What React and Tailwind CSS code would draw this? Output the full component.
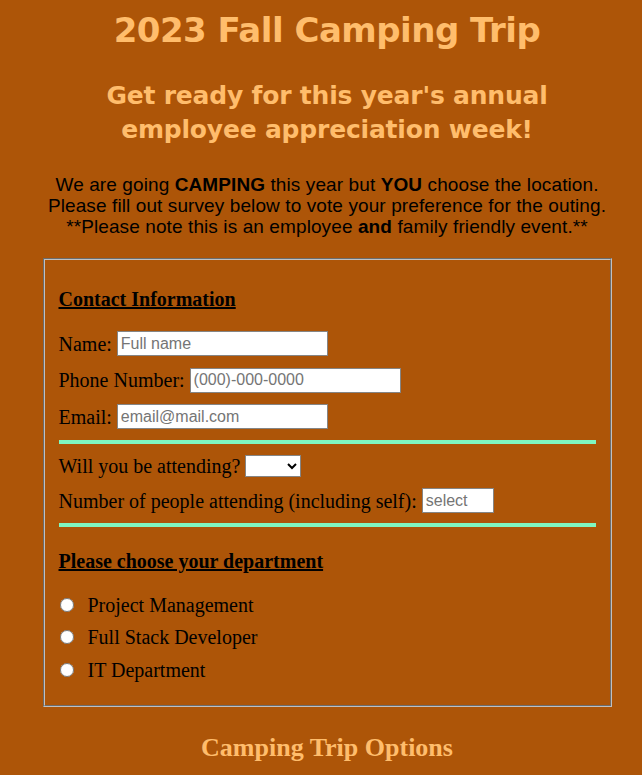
import React from 'react'

const serif = "font-['Liberation_Serif','Times_New_Roman',serif]"

function Row({ label, children, className = '' }) {
  return (
    <div className={`flex items-center ${className}`}>
      <span className="mr-[5px]">{label}</span>
      {children}
    </div>
  )
}

function TextBox({ placeholder, width }) {
  return (
    <input
      type="text"
      placeholder={placeholder}
      className={`${width} h-[25px] bg-white border border-[#858585] pl-[3px] text-[16px] font-['Liberation_Sans',Arial,sans-serif] placeholder:text-[#757575] text-black outline-none`}
    />
  )
}

export default function App() {
  const departments = ['Project Management', 'Full Stack Developer', 'IT Department']

  return (
    <div className="min-h-[775px] bg-[#ad5508] pl-[12px] flex flex-col items-center overflow-hidden">
      <h1 className="mt-[9px] text-[34px] leading-[42px] font-bold text-[#ffbd6c] font-['DejaVu_Sans',sans-serif] tracking-[-0.5px]">
        2023 Fall Camping Trip
      </h1>

      <h2 className="mt-[28px] text-[25px] leading-[34px] font-bold text-[#ffbd6c] text-center font-['DejaVu_Sans',sans-serif] tracking-[-0.2px]">
        Get ready for this year's annual
        <br />
        employee appreciation week!
      </h2>

      <p className="mt-[27px] text-[19px] leading-[21px] text-center text-black font-['Liberation_Sans',Arial,sans-serif] tracking-[0.1px]">
        We are going <b>CAMPING</b> this year but <b>YOU</b> choose the location.
        <br />
        Please fill out survey below to vote your preference for the outing.
        <br />
        **Please note this is an employee <b>and</b> family friendly event.**
      </p>

      {/* survey box */}
      <div className={`mt-[21px] w-[569px] border-2 [border-style:groove] border-[#c0c0c0] px-[14px] pt-[27px] pb-[24px] text-[20px] text-black ${serif}`}>
        <h3 className="font-bold underline leading-[24px] mb-[14px]">Contact Information</h3>

        <Row label="Name:" className="h-[37px]">
          <TextBox placeholder="Full name" width="w-[211px]" />
        </Row>
        <Row label="Phone Number:" className="h-[36px]">
          <TextBox placeholder="(000)-000-0000" width="w-[211px]" />
        </Row>
        <Row label="Email:" className="h-[37px]">
          <TextBox placeholder="email@mail.com" width="w-[211px]" />
        </Row>

        <div className="mt-[5px] h-[4px] bg-[#7ff7c0]" />

        <Row label="Will you be attending?" className="mt-[4px] h-[35px]">
          <select className="w-[56px] h-[22px] bg-white border border-[#858585] text-[14px] font-['Liberation_Sans',Arial,sans-serif]">
            <option></option>
            <option>Yes</option>
            <option>No</option>
          </select>
        </Row>
        <Row label="Number of people attending (including self):" className="h-[35px]">
          <TextBox placeholder="select" width="w-[72px]" />
        </Row>

        <div className="mt-[5px] h-[4px] bg-[#7ff7c0]" />

        <h3 className="mt-[22px] font-bold underline leading-[24px] mb-[20px]">Please choose your department</h3>

        <div className="flex flex-col gap-[9.5px]">
          {departments.map((d) => (
            <label key={d} className="flex items-center h-[23px]">
              <input type="radio" name="dept" className="w-[14px] h-[14px] ml-[1px] mr-[14px]" />
              {d}
            </label>
          ))}
        </div>
      </div>

      <h2 className="mt-[21px] text-[26px] font-bold text-[#ffbd6c] font-['Liberation_Serif',serif]">
        Camping Trip Options
      </h2>
    </div>
  )
}
